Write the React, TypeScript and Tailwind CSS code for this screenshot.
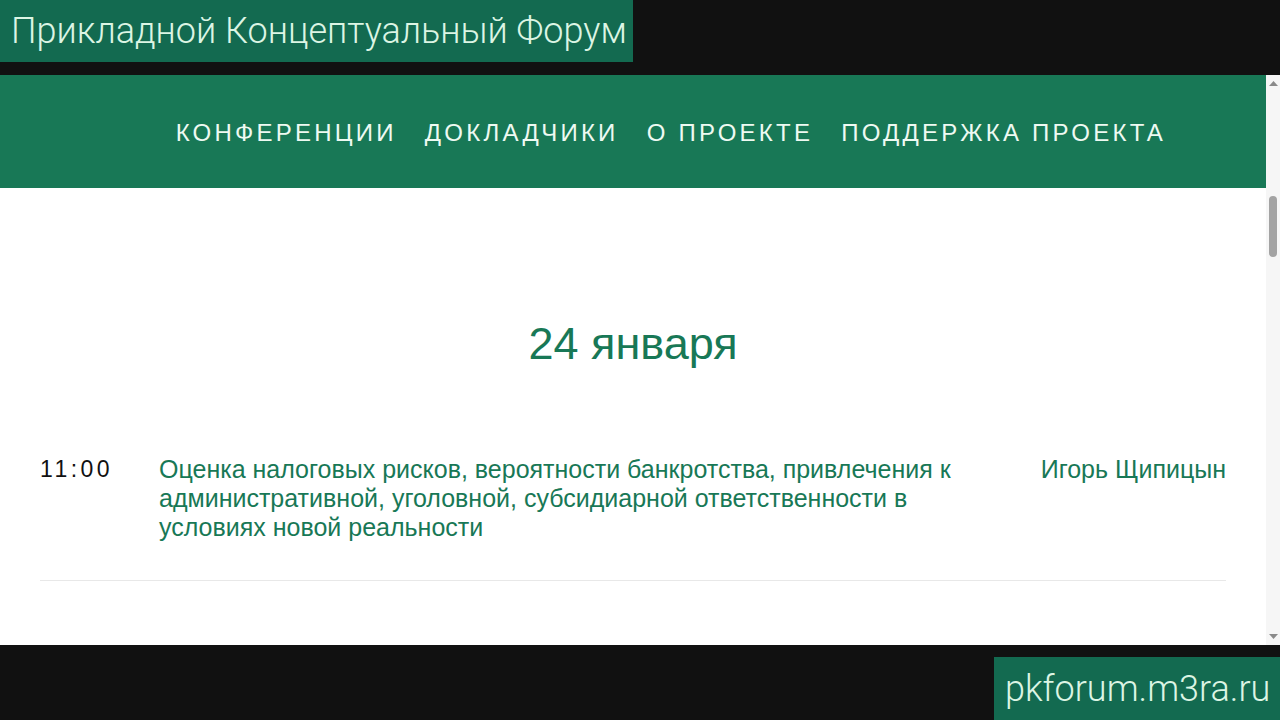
import React from 'react';

const navItems = ['Конференции', 'Докладчики', 'О проекте', 'Поддержка проекта'];

const talks = [
  {
    time: '11:00',
    title:
      'Оценка налоговых рисков, вероятности банкротства, привлечения к административной, уголовной, субсидиарной ответственности в условиях новой реальности',
    speaker: 'Игорь Щипицын',
  },
];

function Scrollbar() {
  return (
    <div className="flex w-[14px] flex-col items-center justify-between bg-[#f6f6f6] py-[4px]">
      <div className="flex flex-col items-center">
        <svg width="9" height="5" viewBox="0 0 9 5" className="mt-[2px]">
          <path d="M0 5 L4.5 0 L9 5 Z" fill="#8a8a8a" />
        </svg>
        <div className="mt-[110px] h-[61px] w-[8px] rounded-full bg-[#a3a3a3]" />
      </div>
      <svg width="9" height="5" viewBox="0 0 9 5" className="mb-[2px]">
        <path d="M0 0 L9 0 L4.5 5 Z" fill="#8a8a8a" />
      </svg>
    </div>
  );
}

export default function App() {
  return (
    <div className="flex h-[720px] w-[1280px] flex-col overflow-hidden bg-[#111111]">
      {/* Overlay title */}
      <div className="h-[75px]">
        <div className="flex h-[62px] w-[633px] items-center bg-[#136a50] pl-[11px]">
          <span className="font-['Roboto',sans-serif] text-[36px] font-light leading-none text-[#dcf5e4]">
            Прикладной Концептуальный Форум
          </span>
        </div>
      </div>

      {/* Page */}
      <div className="flex h-[570px]">
        <main className="w-[1266px] overflow-hidden bg-white font-['Liberation_Sans',Arial,sans-serif]">
          {/* Navigation */}
          <nav className="flex h-[113px] items-center justify-end gap-[28px] bg-[#187856] pr-[100px] pt-[2px]">
            {navItems.map((item) => (
              <a key={item} className="text-[24px] uppercase tracking-[0.135em] text-[#eefaf2]">
                {item}
              </a>
            ))}
          </nav>

          {/* Schedule */}
          <div className="px-10 pt-[131px]">
            <h2 className="text-center text-[45px] leading-[50px] text-[#187856]">24 января</h2>

            <div className="mt-[86px]">
              {talks.map((talk) => (
                <div key={talk.time} className="flex border-b border-[#e8e8e8] pb-[38px]">
                  <div className="w-[119px] shrink-0 text-[23px] leading-[29px] tracking-[0.15em] text-[#111111]">
                    {talk.time}
                  </div>
                  <div className="w-[825px] shrink-0 text-[25px] leading-[29px] text-[#187856]">{talk.title}</div>
                  <div className="flex-1 text-right text-[25px] leading-[29px] text-[#187856]">{talk.speaker}</div>
                </div>
              ))}
            </div>
          </div>
        </main>
        <Scrollbar />
      </div>

      {/* Overlay site address */}
      <div className="flex h-[75px] items-end justify-end">
        <div className="flex h-[63px] w-[286px] items-center bg-[#136a50] pl-[11px]">
          <span className="font-['Roboto',sans-serif] text-[36px] font-light leading-none text-[#dcf5e4]">
            pkforum.m3ra.ru
          </span>
        </div>
      </div>
    </div>
  );
}
